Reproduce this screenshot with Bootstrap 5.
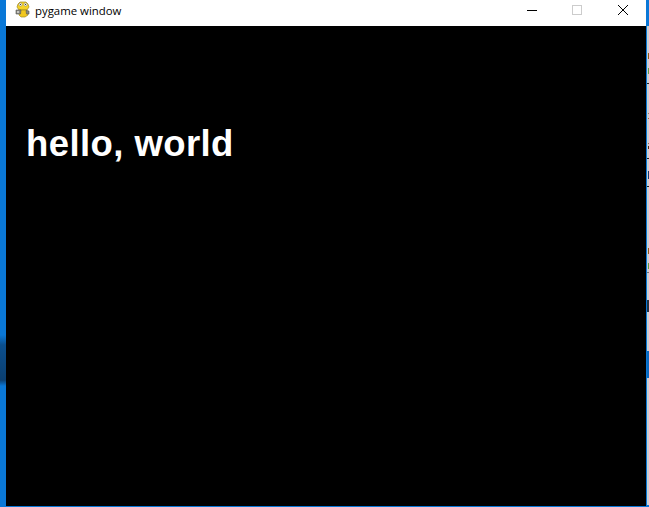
<!DOCTYPE html>
<html lang="en">

<head>
    <meta charset="UTF-8">
    <title>pygame window</title>
    <link href="https://cdn.jsdelivr.net/npm/bootstrap@5.3.3/dist/css/bootstrap.min.css" rel="stylesheet">
    <style>
        html, body { height: 507px; overflow: hidden; }
        body { background: #0a78d7; }
        .desk-left { width: 6px; background: linear-gradient(#0a78d7 0, #0a78d7 335px, #0b4f8e 345px, #0b3f70 380px, #0a78d7 386px); }
        .app-window { width: 640px; height: 506px; }
        .title-bar { height: 26px; background: #fff; }
        .title-text { font-family: "Open Sans", "Noto Sans", sans-serif; font-size: 11.4px; color: #000; line-height: 1; margin-left: 4px; padding-top: 5px; }
        .app-icon { margin-left: 9px; margin-top: 1px; }
        .win-btn { width: 46px; height: 26px; }
        .canvas-area { background: #000; }
        .hello-text { font-family: "Liberation Sans", Arial, sans-serif; font-weight: 700; font-size: 36.5px; letter-spacing: .42px; line-height: 1; color: #fff; padding: 100px 0 0 20px; margin: 0; }
        .desk-edge { width: 1px; background: #0a78d7; }
        .desk-right { width: 2px; }
    </style>
</head>

<body class="m-0">
    <div class="d-flex">
        <div class="desk-left flex-shrink-0"></div>
        <div class="app-window d-flex flex-column flex-shrink-0">
            <div class="title-bar d-flex align-items-start">
                <svg class="app-icon" width="16" height="17" viewBox="0 0 16 17">
                    <path d="M3 3l2-2h6l2 2 1 3-2 3H4L2 6z" fill="#f5d327" stroke="#a08a20" stroke-width=".7"/>
                    <circle cx="5.5" cy="3.5" r="1.6" fill="#fff" stroke="#777" stroke-width=".5"/>
                    <circle cx="10.5" cy="3.5" r="1.6" fill="#fff" stroke="#777" stroke-width=".5"/>
                    <circle cx="5.5" cy="3.5" r=".6" fill="#222"/>
                    <circle cx="10.5" cy="3.5" r=".6" fill="#222"/>
                    <path d="M5 9h7l1 5-3 2H6l-2-2z" fill="#f2c81f" stroke="#a08a20" stroke-width=".7"/>
                    <path d="M1 9h5l-.5 4H1zM14 10l-3-.5.5 3.500h2.500z" fill="#8b8b85" stroke="#55554f" stroke-width=".6"/>
                    <circle cx="3" cy="11" r=".9" fill="#e5e5e0"/>
                </svg>
                <span class="title-text">pygame window</span>
                <div class="ms-auto d-flex">
                    <svg class="win-btn" viewBox="0 0 46 26"><path d="M19 10.500h10" stroke="#000" fill="none"/></svg>
                    <svg class="win-btn" viewBox="0 0 46 26"><rect x="18.500" y="5.500" width="9" height="9" stroke="#ccc" fill="none"/></svg>
                    <svg class="win-btn" viewBox="0 0 46 26"><path d="M18 5l10 10M28 5L18 15" stroke="#000" fill="none"/></svg>
                </div>
            </div>
            <div class="canvas-area flex-grow-1">
                <h1 class="hello-text">hello, world</h1>
            </div>
        </div>
        <div class="desk-edge flex-shrink-0"></div>
        <svg class="desk-right flex-shrink-0" width="2" height="507" viewBox="0 0 2 507" shape-rendering="crispEdges">
            <rect width="2" height="507" fill="#c9d0d4"/>
            <rect y="0" width="2" height="26" fill="#0a78d7"/>
            <rect x="1" y="53" width="1" height="6" fill="#8a5a1a"/>
            <rect x="1" y="68" width="1" height="6" fill="#5f9a4a"/>
            <rect y="83" width="2" height="1" fill="#222"/>
            <rect x="1" y="113" width="1" height="1" fill="#9a7a6a"/>
            <rect x="1" y="118" width="1" height="1" fill="#9a6a4a"/>
            <rect x="1" y="143" width="1" height="1" fill="#8a6a5a"/>
            <rect x="1" y="146" width="1" height="3" fill="#4a2a1a"/>
            <rect y="158" width="2" height="1" fill="#222"/>
            <rect x="1" y="171" width="1" height="8" fill="#1a3a6a"/>
            <rect y="186" width="2" height="1" fill="#222"/>
            <rect x="1" y="248" width="1" height="6" fill="#8a5a1a"/>
            <rect x="1" y="263" width="1" height="6" fill="#5f9a4a"/>
            <rect y="272" width="2" height="1" fill="#777"/>
            <rect y="300" width="2" height="12" fill="#23313f"/>
            <rect y="351" width="2" height="27" fill="#0a6ac0"/>
            <rect y="505" width="2" height="2" fill="#0a78d7"/>
        </svg>
    </div>
</body>

</html>
